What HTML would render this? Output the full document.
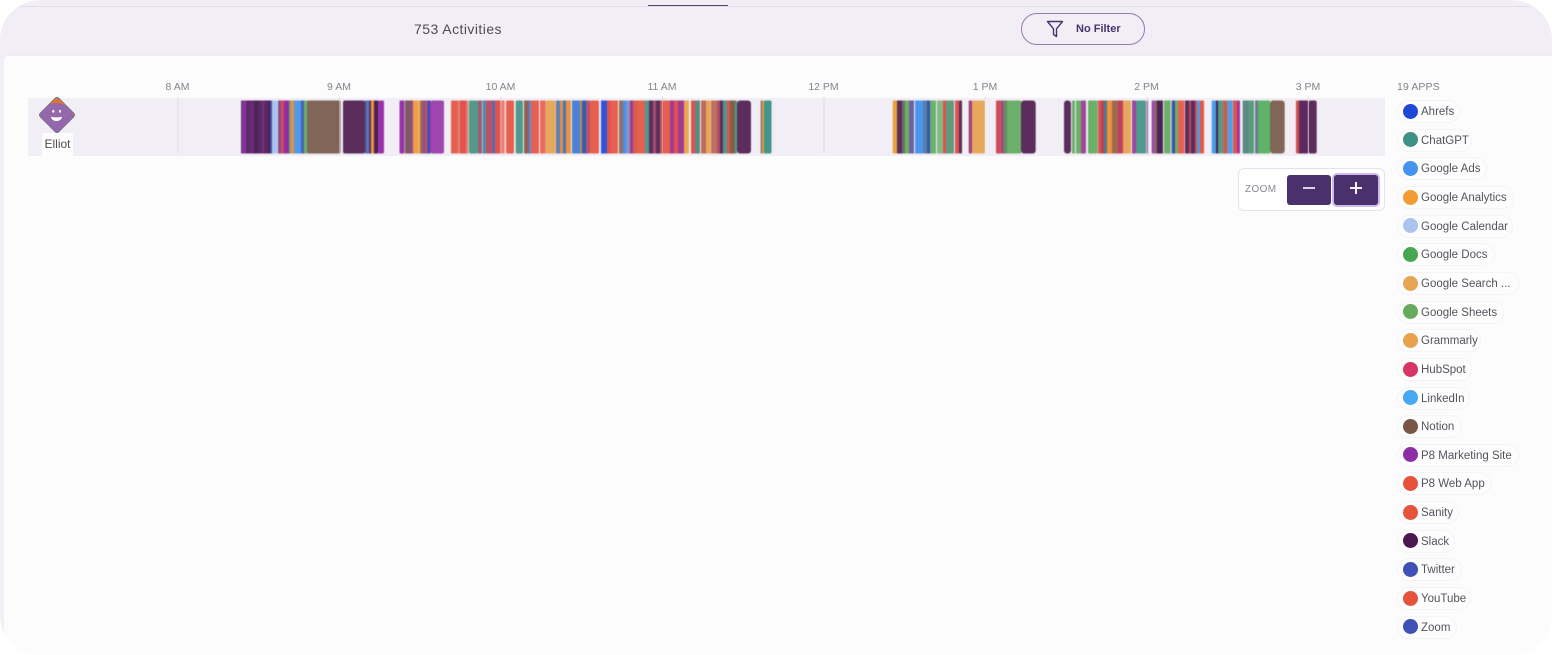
<!DOCTYPE html>
<html lang="en"><head><meta charset="utf-8"><title>Activities</title>
<style>
*{box-sizing:border-box;margin:0;padding:0}
html,body{width:1552px;height:655px;background:#fff;overflow:hidden;font-family:"Liberation Sans",sans-serif}
#page{position:absolute;left:0;top:0;width:1552px;height:655px;background:#f1eff5;border-radius:40px;overflow:hidden}
.abs{position:absolute}
#panel{position:absolute;left:4px;top:56px;width:1548px;height:599px;background:#fcfcfd;border-radius:4px 0 0 0;box-shadow:0 -1px 1px #ecebf0}
.t{position:absolute;top:80.5px;width:60px;text-align:center;font-size:10.5px;line-height:13px;color:#85828c}
.c{position:absolute;left:1397px;height:23px;border:1px solid #f4f3f6;border-radius:12px;background:#fdfdfe;font-size:11.5px;line-height:22.5px;color:#55525c;padding-left:23px;white-space:nowrap}
.c i{position:absolute;left:5px;top:2.5px;width:15px;height:15px;border-radius:50%}
</style></head><body>
<div id="page">
<div class="abs" style="left:20px;top:6px;width:1510px;height:1px;background:#e2deeb"></div>
<div class="abs" style="left:648px;top:5px;width:80px;height:1px;background:#4f4a6a"></div>
<div class="abs" style="left:414px;top:21px;font-size:14px;line-height:17px;letter-spacing:.45px;color:#4e4b54">753 Activities</div>
<div class="abs" style="left:1021px;top:13px;width:124px;height:32px;border:1.5px solid #9a78b0;border-radius:16px"></div>
<svg class="abs" style="left:1046px;top:20px" width="18" height="18" viewBox="0 0 18 18"><path d="M1.5 1.5H16.5L10.5 8.8V16.5L7.5 14.5V8.8Z" fill="none" stroke="#4a316e" stroke-width="1.4" stroke-linejoin="round"/></svg>
<div class="abs" style="left:1076px;top:23px;font-size:11px;line-height:13px;font-weight:bold;color:#4a316e">No Filter</div>

<div id="panel"></div>
<div class="abs" style="left:28px;top:97.5px;width:1357px;height:58.5px;background:#f1eff5"></div>

<svg class="abs" style="left:0;top:0" width="1552" height="160" viewBox="0 0 1552 160">
<g fill="#dfdce5"><rect x="177.5" y="97" width="1" height="56"/><rect x="823.5" y="97" width="1" height="56"/><rect x="500.5" y="97" width="1" height="3"/><rect x="662" y="97" width="1" height="3"/><rect x="339" y="97" width="1" height="3"/><rect x="985" y="97" width="1" height="3"/><rect x="1146.5" y="97" width="1" height="3"/><rect x="1308" y="97" width="1" height="3"/></g>
<g transform="translate(0,100.5)" style="filter:blur(.4px)">
<rect x="241" width="2" height="53" fill="#6a3a78"/><rect x="243" width="3" height="53" fill="#8e2ea6"/><rect x="246" width="4" height="53" fill="#5e2a68"/><rect x="250" width="4" height="53" fill="#6a2a72"/><rect x="254" width="4" height="53" fill="#4f2258"/>
<rect x="258" width="4" height="53" fill="#5a2a62"/><rect x="262" width="2" height="53" fill="#7b2a88"/><rect x="264" width="4" height="53" fill="#5a2a62"/><rect x="268" width="2" height="53" fill="#4a2050"/><rect x="270" width="2" height="53" fill="#4a4aa8"/>
<rect x="272" width="5.5" height="53" fill="#a9c4ec"/><rect x="278" width="3" height="53" fill="#8a4a90"/><rect x="281" width="3" height="53" fill="#d04a58"/><rect x="284" width="5" height="53" fill="#8e2ea6"/><rect x="289" width="2" height="53" fill="#7aa070"/><rect x="291" width="2.5" height="53" fill="#e8953c"/><rect x="293.500" width="2.500" height="53" fill="#7a8fd0"/><rect x="296" width="5" height="53" fill="#4a9de8"/><rect x="301" width="3" height="53" fill="#4a60b0"/><rect x="304" width="3" height="53" fill="#6bb069"/>
<rect x="307" width="33.500" height="53" rx="1.500" fill="#806558"/><rect x="343" width="22" height="53" rx="2" fill="#5a2d5c"/><rect x="365" width="2" height="53" fill="#5a5a98"/><rect x="367" width="2" height="53" fill="#4a80d8"/><rect x="369" width="2" height="53" fill="#5a2d5c"/><rect x="371" width="3" height="53" fill="#e8953c"/><rect x="374" width="4" height="53" fill="#4a2050"/><rect x="378" width="6" height="53" rx="1.500" fill="#9a33ab"/>

<rect x="399.500" width="5" height="53" rx="1" fill="#9a33ab"/><rect x="405" width="6" height="53" fill="#7b5a60"/><rect x="411" width="2" height="53" fill="#a0459a"/><rect x="413" width="5" height="53" fill="#f0a040"/><rect x="418" width="2" height="53" fill="#f0b060"/><rect x="420" width="2" height="53" fill="#b06a50"/><rect x="422" width="4" height="53" fill="#9a5080"/><rect x="426" width="1.500" height="53" fill="#b05a60"/><rect x="427.500" width="2" height="53" fill="#2f4fbf"/><rect x="429.500" width="1.500" height="53" fill="#8e3aa0"/><rect x="431" width="13" height="53" rx="2" fill="#9e45ae"/>

<rect x="451" width="7" height="53" rx="1" fill="#e5604f"/><rect x="458" width="2" height="53" fill="#e88070"/><rect x="460" width="6" height="53" fill="#e0524e"/><rect x="466" width="2.500" height="53" fill="#e88070"/><rect x="469" width="9" height="53" rx="1.500" fill="#4f9a8b"/><rect x="478" width="4" height="53" fill="#a05a70"/><rect x="482.500" width="3.500" height="53" fill="#4a90b0"/><rect x="486" width="6" height="53" fill="#c05060"/><rect x="492" width="3" height="53" fill="#5a6ab0"/><rect x="495" width="5" height="53" fill="#e0524e"/><rect x="500" width="4.700" height="53" fill="#e88070"/>
<rect x="506" width="8" height="53" rx="1.500" fill="#e5604f"/><rect x="515.700" width="7.300" height="53" rx="1.500" fill="#4f9a8b"/><rect x="524" width="5" height="53" fill="#906050"/><rect x="529" width="2" height="53" fill="#4a90e8"/><rect x="531" width="8" height="53" fill="#e5604f"/><rect x="540" width="5.700" height="53" fill="#e86a5a"/><rect x="546" width="9.700" height="53" rx="1" fill="#e8a85c"/>
<rect x="556" width="4" height="53" fill="#5a80b8"/><rect x="560" width="3" height="53" fill="#e09040"/><rect x="563" width="3" height="53" fill="#4a70c0"/><rect x="566" width="5" height="53" fill="#e8953c"/><rect x="572" width="8" height="53" fill="#4a80d8"/><rect x="580" width="2" height="53" fill="#c08a50"/><rect x="582" width="4.700" height="53" fill="#3a5ab0"/><rect x="586.700" width="3.300" height="53" fill="#c05060"/><rect x="590" width="9" height="53" rx="1.500" fill="#e5604f"/>
<rect x="601" width="6" height="53" fill="#2a55d8"/><rect x="607" width="4" height="53" fill="#e0524e"/><rect x="611" width="7" height="53" fill="#e5604f"/><rect x="619" width="4" height="53" fill="#907060"/><rect x="623" width="3.700" height="53" fill="#4a90e8"/><rect x="626.700" width="3.300" height="53" fill="#8a90c0"/><rect x="630" width="3" height="53" fill="#a03a90"/><rect x="633" width="4" height="53" fill="#d06050"/><rect x="637" width="8" height="53" fill="#e5604f"/><rect x="645" width="4" height="53" fill="#4f9a8b"/><rect x="649" width="4" height="53" fill="#5a2d5c"/><rect x="653" width="3" height="53" fill="#a05070"/><rect x="656" width="4" height="53" fill="#5a2d5c"/><rect x="660" width="3" height="53" fill="#c05a60"/><rect x="663" width="7" height="53" fill="#e5604f"/><rect x="670" width="4" height="53" fill="#a03a90"/><rect x="674" width="4" height="53" fill="#e0524e"/><rect x="678" width="6" height="53" fill="#a03a90"/><rect x="684" width="5" height="53" rx="1" fill="#eaa850"/>
<rect x="691" width="4" height="53" fill="#e0524e"/><rect x="695" width="5" height="53" fill="#5a8a80"/><rect x="701" width="5" height="53" fill="#c06a5a"/><rect x="706" width="4.700" height="53" fill="#e8a85c"/><rect x="711" width="6" height="53" fill="#c07060"/><rect x="717" width="3" height="53" fill="#b05060"/><rect x="720" width="3" height="53" fill="#5a2d5c"/><rect x="723" width="4" height="53" fill="#4f9a8b"/><rect x="727" width="3" height="53" fill="#e0524e"/><rect x="730" width="5" height="53" fill="#806040"/><rect x="735" width="2" height="53" fill="#4f9a8b"/><rect x="737" width="14" height="53" rx="3" fill="#5a2d5c"/>
<rect x="760.700" width="1.500" height="53" fill="#806558"/><rect x="762.200" width="1.800" height="53" fill="#e8953c"/><rect x="764" width="7.500" height="53" rx="1.500" fill="#40968a"/>

<rect x="892.700" width="4.300" height="53" rx="1" fill="#e8a040"/><rect x="897" width="5" height="53" fill="#5a2d5c"/><rect x="902" width="3" height="53" fill="#707060"/><rect x="905" width="4" height="53" fill="#6bb069"/><rect x="909" width="5" height="53" fill="#7060a0"/><rect x="915" width="8" height="53" fill="#4a96ec"/><rect x="923" width="4" height="53" fill="#5a80a0"/><rect x="927" width="3" height="53" fill="#3a50b8"/><rect x="930" width="6" height="53" fill="#6bb069"/><rect x="937" width="6" height="53" fill="#84b884"/><rect x="943" width="3" height="53" fill="#e0524e"/><rect x="946" width="8" height="53" fill="#5f9a7a"/><rect x="955" width="4" height="53" fill="#e0524e"/><rect x="959" width="3" height="53" rx="1" fill="#5a2d5c"/>
<rect x="968.700" width="3.300" height="53" rx="1" fill="#a04080"/><rect x="972" width="13" height="53" rx="1.500" fill="#e8a85c"/>
<rect x="996" width="5.700" height="53" rx="1" fill="#d04a58"/><rect x="1001.700" width="1.300" height="53" fill="#8e2ea6"/><rect x="1003" width="4" height="53" fill="#6a8a60"/><rect x="1007" width="14" height="53" fill="#6bb069"/><rect x="1021" width="14.700" height="53" rx="3" fill="#5a2d5c"/>
<rect x="1064" width="7" height="53" rx="3" fill="#5a2d5c"/><rect x="1072" width="3" height="53" fill="#6bb069"/><rect x="1076" width="5" height="53" fill="#6bb069"/><rect x="1081" width="5" height="53" rx="1" fill="#a0459a"/><rect x="1088" width="9.700" height="53" rx="1" fill="#6bb069"/><rect x="1098" width="3" height="53" fill="#e0524e"/><rect x="1101" width="3" height="53" fill="#c04050"/><rect x="1104" width="3" height="53" fill="#4a7a90"/><rect x="1107" width="5" height="53" fill="#e8953c"/><rect x="1112" width="6" height="53" fill="#a06a50"/><rect x="1118" width="5" height="53" fill="#c04060"/><rect x="1123" width="8" height="53" fill="#e8a85c"/><rect x="1132" width="4" height="53" fill="#9a45a0"/><rect x="1136" width="10" height="53" rx="1.500" fill="#4f9a8b"/><rect x="1146.500" width="1.500" height="53" fill="#9a45a0"/>
<rect x="1151.700" width="3" height="53" rx="1" fill="#9a45ab"/><rect x="1154.700" width="2.300" height="53" fill="#806558"/><rect x="1157" width="6" height="53" fill="#4f2258"/><rect x="1164" width="6.700" height="53" fill="#6bb069"/><rect x="1171.700" width="3.300" height="53" fill="#3a50b0"/><rect x="1175" width="3" height="53" fill="#6bb069"/><rect x="1178" width="6.400" height="53" fill="#e5604f"/><rect x="1185" width="4" height="53" fill="#5a2d5c"/><rect x="1189" width="1.700" height="53" fill="#c84050"/><rect x="1190.700" width="4.300" height="53" fill="#5a2d5c"/><rect x="1195" width="2" height="53" fill="#d05050"/><rect x="1197" width="3" height="53" fill="#4a9de8"/><rect x="1200" width="4" height="53" rx="1" fill="#e5573f"/>
<rect x="1211.700" width="4.300" height="53" rx="1" fill="#4a9de8"/><rect x="1216" width="2" height="53" fill="#4a2050"/><rect x="1218" width="4.700" height="53" fill="#4f9a8b"/><rect x="1222.700" width="5" height="53" fill="#c06050"/><rect x="1227.700" width="5" height="53" fill="#4a9de8"/><rect x="1233" width="4" height="53" fill="#e0524e"/><rect x="1237" width="3" height="53" rx="1" fill="#a0359a"/>
<rect x="1242.700" width="5.300" height="53" fill="#5a8a80"/><rect x="1248" width="6" height="53" fill="#5a9a80"/><rect x="1255" width="3" height="53" fill="#6a7a90"/><rect x="1258" width="12" height="53" fill="#5fb368"/><rect x="1270" width="14.700" height="53" rx="3" fill="#806558"/>
<rect x="1296" width="2.700" height="53" rx="1" fill="#d84a40"/><rect x="1298.700" width="9.300" height="53" fill="#5e2a5e"/><rect x="1308.500" width="8.200" height="53" rx="2" fill="#5a2d5c"/>
</g>
<g fill="#fff" fill-opacity=".35"><rect x="339" y="100" width="1" height="53.500"/><rect x="500.500" y="100" width="1" height="53.500"/><rect x="662" y="100" width="1" height="53.500"/><rect x="985" y="100" width="1" height="53.500"/><rect x="1146.500" y="100" width="1" height="53.500"/><rect x="1308" y="100" width="1" height="53.500"/></g>
<rect x="42" y="133" width="31" height="23" rx="2" fill="#fdfdfe"/>
<rect x="43.500" y="101.500" width="27" height="27" rx="3" transform="rotate(45 57 115)" fill="#3f5a78"/>
<clipPath id="dm"><rect x="44" y="102" width="26" height="26" rx="3" transform="rotate(45 57 115)"/></clipPath>
<g clip-path="url(#dm)"><rect x="36" y="94" width="42" height="42" fill="#dd7638"/><circle cx="56" cy="122" r="19" fill="#9567ab"/><rect x="36" y="122" width="42" height="14" fill="#9567ab"/></g>
<ellipse cx="53.300" cy="111.300" rx="1.100" ry="1.400" fill="#fff"/><ellipse cx="60" cy="111.300" rx="1.100" ry="1.400" fill="#fff"/><path d="M51 116.800Q56.500 118 62 116.800C61.500 122.500 51.500 122.500 51 116.800Z" fill="#fff"/>
</svg>

<div class="abs" style="left:42px;top:137px;width:31px;text-align:center;font-size:12px;line-height:15px;color:#4e4b54">Elliot</div>

<div class="t" style="left:147.500px">8 AM</div><div class="t" style="left:309px">9 AM</div><div class="t" style="left:470.500px">10 AM</div><div class="t" style="left:632px">11 AM</div><div class="t" style="left:793.500px">12 PM</div><div class="t" style="left:955px">1 PM</div><div class="t" style="left:1116.500px">2 PM</div><div class="t" style="left:1278px">3 PM</div>

<div class="abs" style="left:1397px;top:80.500px;font-size:10.500px;line-height:13px;letter-spacing:.1px;color:#85828c">19 APPS</div>

<div class="abs" style="left:1238px;top:168px;width:147px;height:43px;background:#fff;border:1px solid #e4e1ec;border-radius:6px"></div>
<div class="abs" style="left:1245px;top:183.500px;font-size:10px;line-height:12px;letter-spacing:.35px;color:#8a8790">ZOOM</div>
<div class="abs" style="left:1287px;top:175px;width:44px;height:30px;background:#4a316e;border-radius:3px"></div>
<div class="abs" style="left:1303px;top:187px;width:12px;height:2px;background:#d8d2e2"></div>
<div class="abs" style="left:1332px;top:173px;width:48px;height:34px;background:#4a316e;border:2px solid #cdb9ea;border-radius:5px"></div>
<div class="abs" style="left:1350px;top:187px;width:12px;height:2px;background:#f2eff6"></div>
<div class="abs" style="left:1355px;top:182px;width:2px;height:12px;background:#f2eff6"></div>

<div class="c" style="top:100px;width:63px"><i style="background:#1f48d6"></i>Ahrefs</div>
<div class="c" style="top:128.500px;width:75px"><i style="background:#3f9184"></i>ChatGPT</div>
<div class="c" style="top:157px;width:90px"><i style="background:#4693ef"></i>Google Ads</div>
<div class="c" style="top:186px;width:117px"><i style="background:#f39c34"></i>Google Analytics</div>
<div class="c" style="top:214.500px;width:116px"><i style="background:#aac4ec"></i>Google Calendar</div>
<div class="c" style="top:243px;width:98px"><i style="background:#47a651"></i>Google Docs</div>
<div class="c" style="top:272px;width:122px"><i style="background:#e8a653"></i>Google Search ...</div>
<div class="c" style="top:300.500px;width:107px"><i style="background:#66ab5c"></i>Google Sheets</div>
<div class="c" style="top:329px;width:84px"><i style="background:#e8a24d"></i>Grammarly</div>
<div class="c" style="top:358px;width:75px"><i style="background:#d73564"></i>HubSpot</div>
<div class="c" style="top:386.500px;width:73px"><i style="background:#47a7f0"></i>LinkedIn</div>
<div class="c" style="top:415px;width:65px"><i style="background:#785648"></i>Notion</div>
<div class="c" style="top:443.500px;width:122px"><i style="background:#8e2ea6"></i>P8 Marketing Site</div>
<div class="c" style="top:472px;width:94px"><i style="background:#e5533d"></i>P8 Web App</div>
<div class="c" style="top:501px;width:62px"><i style="background:#e5533d"></i>Sanity</div>
<div class="c" style="top:529.500px;width:58px"><i style="background:#4a184f"></i>Slack</div>
<div class="c" style="top:558px;width:65px"><i style="background:#3f51b5"></i>Twitter</div>
<div class="c" style="top:587px;width:74px"><i style="background:#e5533d"></i>YouTube</div>
<div class="c" style="top:615.500px;width:60px"><i style="background:#3f51b5"></i>Zoom</div>
</div>
</body></html>
